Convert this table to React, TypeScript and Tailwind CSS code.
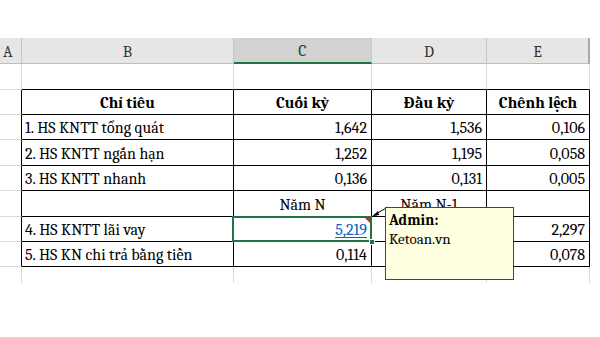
const colW = ['w-[22px]', 'w-[212px]', 'w-[138px]', 'w-[115px]', 'w-[103px]'];
const rowH = ['h-[25px]', 'h-[25px]', 'h-[26px]', 'h-[25px]', 'h-[26px]', 'h-[25px]', 'h-[25px]'];

const rows: string[][] = [
  ['Chỉ tiêu', 'Cuối kỳ', 'Đầu kỳ', 'Chênh lệch'],
  ['1. HS KNTT tổng quát', '1,642', '1,536', '0,106'],
  ['2. HS KNTT ngắn hạn', '1,252', '1,195', '0,058'],
  ['3. HS KNTT nhanh', '0,136', '0,131', '0,005'],
  ['', 'Năm N', 'Năm N-1', ''],
  ['4. HS KNTT lãi vay', '5,219', '', '2,297'],
  ['5. HS KN chi trả bằng tiền', '0,114', '', '0,078'],
];

function SelectedCell({ value }: { value: string }) {
  return (
    <div className="relative flex h-full items-end justify-end pr-[4px] pb-[1px] leading-[20px]">
      <span className="text-[#0563c1] underline decoration-1 underline-offset-2">{value}</span>
      {/* selection frame */}
      <div className="pointer-events-none absolute top-[-1px] right-[-1px] bottom-[-1px] left-[-2px] border-2 border-[#217346]" />
      {/* comment marker */}
      <div className="absolute top-[1px] right-[1px] h-0 w-0 border-t-[5px] border-l-[5px] border-t-[#e02020] border-l-transparent" />
      {/* fill handle */}
      <div className="absolute right-[-4px] bottom-[-4px] h-[6px] w-[6px] border border-white bg-[#217346]" />
    </div>
  );
}

export default function App() {
  return (
    <div className="relative h-[337px] w-[600px] overflow-hidden bg-white font-serif text-[16px] text-black">
      <div className="h-[38px]" />

      {/* column headers */}
      <div className="flex h-[26px] w-[590px] bg-[#e6e6e6] text-[#333]">
        {['A', 'B', 'C', 'D', 'E'].map((l, i) => (
          <div
            key={l}
            className={`${colW[i]} flex items-end pb-[1px] leading-[20px] border-b ${
              i === 2
                ? 'justify-center border-r border-r-[#c6c6c6] border-b-2 border-b-[#217346] bg-[#d2d2d2] text-[#1f4e34]'
                : i === 0
                  ? 'justify-start pl-[3px] border-r border-r-[#c6c6c6] border-b-[#bdbdbd]'
                  : i === 4
                    ? 'justify-center border-r-2 border-r-[#a8a8a8] border-b-[#bdbdbd]'
                    : 'justify-center border-r border-r-[#c6c6c6] border-b-[#bdbdbd]'
            }`}
          >
            {l}
          </div>
        ))}
      </div>

      {/* empty row above table */}
      <div className="flex h-[26px] w-[590px]">
        <div className={`${colW[0]} border-r border-b border-r-[#d9d9d9] border-b-[#d9d9d9]`} />
        {[1, 2, 3, 4].map((i) => (
          <div
            key={i}
            className={`${colW[i]} border-r border-b border-r-[#d9d9d9] border-b-black`}
          />
        ))}
      </div>

      {/* table */}
      {rows.map((r, ri) => (
        <div key={ri} className={`flex ${rowH[ri]} w-[590px]`}>
          <div className={`${colW[0]} border-r border-b border-r-black border-b-[#d9d9d9]`} />
          {r.map((v, ci) => {
            const col = ci + 1;
            const header = ri === 0;
            const centered = header || ri === 4;
            const base = `${colW[col]} border-r border-b border-black overflow-visible whitespace-nowrap`;
            if (ri === 5 && col === 2) {
              return (
                <div key={ci} className={base}>
                  <SelectedCell value={v} />
                </div>
              );
            }
            return (
              <div
                key={ci}
                className={`${base} flex items-end pb-[1px] leading-[20px] ${
                  centered ? 'justify-center' : col === 1 ? 'justify-start pl-[3px]' : 'justify-end pr-[4px]'
                } ${header ? 'font-bold' : ''}`}
              >
                {v}
              </div>
            );
          })}
        </div>
      ))}

      {/* partial row below table */}
      <div className="flex h-[16px] w-[590px]">
        {[0, 1, 2, 3, 4].map((i) => (
          <div key={i} className={`${colW[i]} border-r border-r-[#d9d9d9]`} />
        ))}
      </div>

      {/* comment arrow */}
      <svg className="absolute top-[204px] left-[368px]" width="24" height="16" viewBox="0 0 24 16">
        <line x1="20" y1="3" x2="6" y2="11" stroke="#000" strokeWidth="1" />
        <polygon points="4,12.5 10,7 11,11" fill="#000" />
      </svg>

      {/* comment box */}
      <div className="absolute top-[207px] left-[385px] h-[73px] w-[129px] border border-[#444] bg-[#ffffe1] px-[3px] pt-[3px] text-[15px] leading-[19px]">
        <div className="font-bold">Admin:</div>
        <div>Ketoan.vn</div>
      </div>
    </div>
  );
}
